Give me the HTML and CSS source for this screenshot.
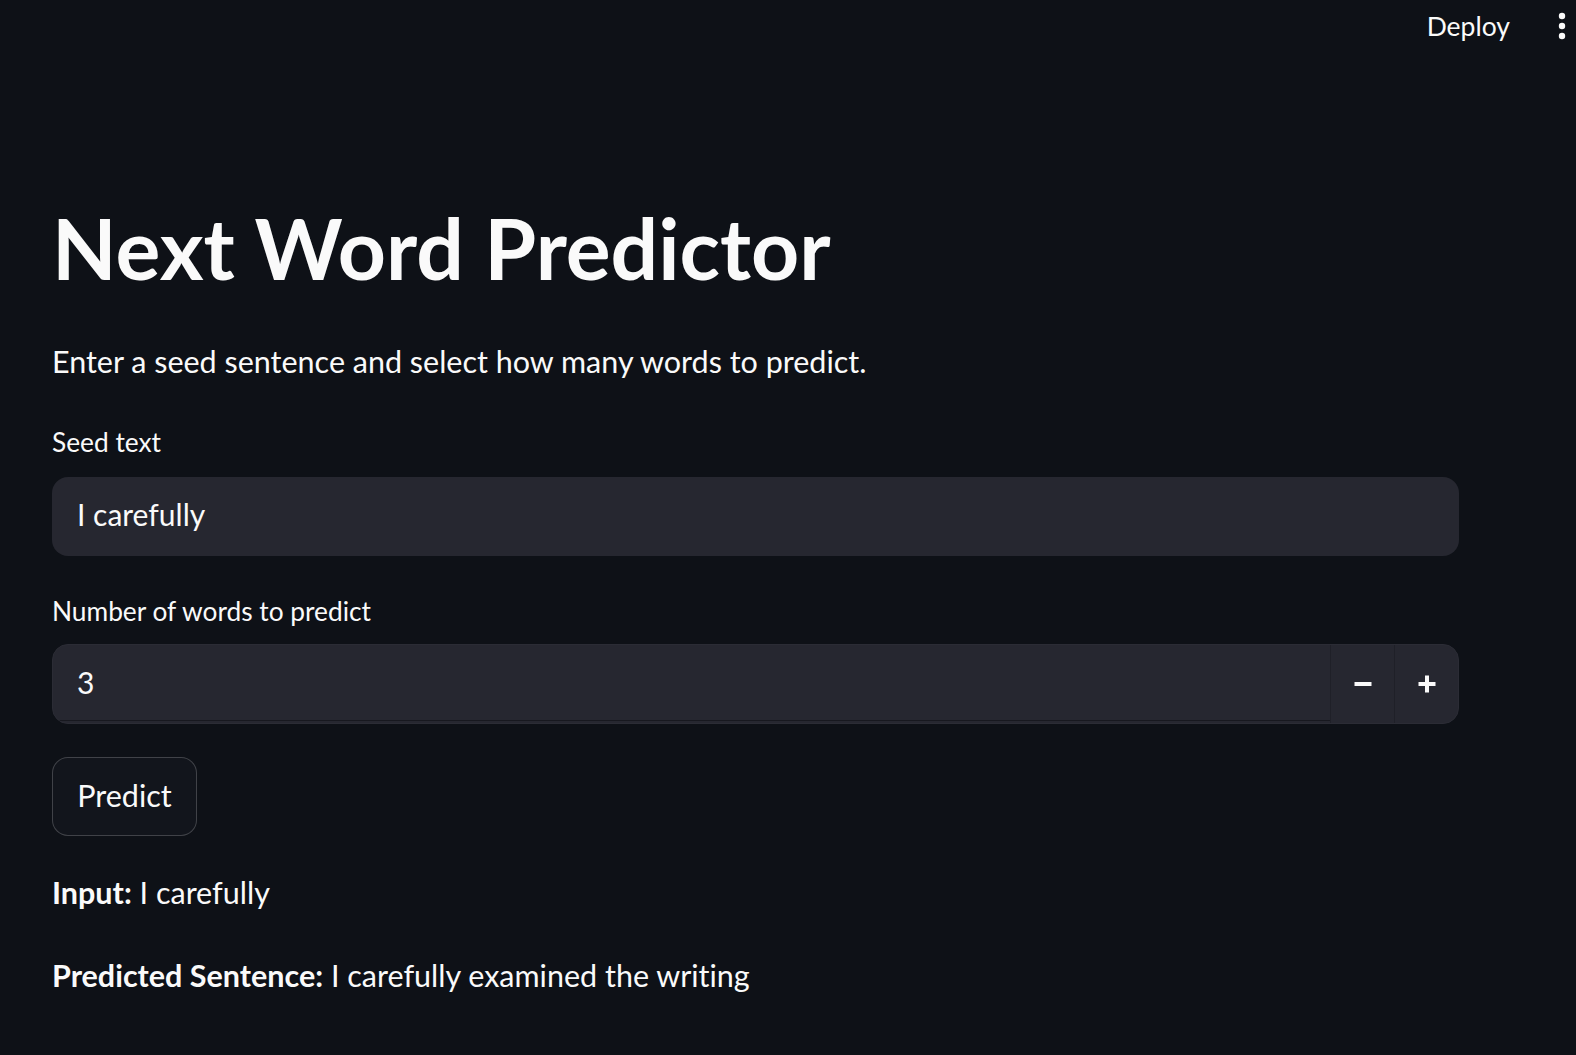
FILE: index.html
```html
<!DOCTYPE html>
<html lang="en">
<head>
<meta charset="utf-8">
<title>Next Word Predictor</title>
<link rel="stylesheet" href="styles.css">
</head>
<body>
<header class="topbar">
  <span class="deploy">Deploy</span>
  <span class="kebab" aria-label="menu">
    <svg width="8" height="28" viewBox="0 0 8 28"><circle cx="4" cy="4" r="3.2" fill="#fafafa"/><circle cx="4" cy="14" r="3.2" fill="#fafafa"/><circle cx="4" cy="24" r="3.2" fill="#fafafa"/></svg>
  </span>
</header>
<main class="main">
  <h1 class="title">Next Word Predictor</h1>
  <p class="lead">Enter a seed sentence and select how many words to predict.</p>

  <label class="label label-seed">Seed text</label>
  <div class="field">I carefully</div>

  <label class="label label-num">Number of words to predict</label>
  <div class="number">
    <div class="number-value">3</div>
    <button class="step step-minus" aria-label="decrement">
      <svg width="18" height="18" viewBox="0 0 18 18"><rect x="0.5" y="7" width="17" height="4" fill="#fafafa"/></svg>
    </button>
    <button class="step step-plus" aria-label="increment">
      <svg width="18" height="18" viewBox="0 0 18 18"><rect x="0.5" y="7" width="17" height="4" fill="#fafafa"/><rect x="7" y="0.5" width="4" height="17" fill="#fafafa"/></svg>
    </button>
  </div>

  <button class="predict">Predict</button>

  <p class="out out-input"><strong>Input:</strong> I carefully</p>
  <p class="out out-pred"><strong>Predicted Sentence:</strong> I carefully examined the writing</p>
</main>
</body>
</html>
```

FILE: styles.css
```css
* { box-sizing: border-box; }
html, body {
  margin: 0;
  padding: 0;
  background: #0e1117;
  color: #fafafa;
  font-family: Lato, "Noto Sans", sans-serif;
  font-variant-ligatures: none;
}
body { height: 1055px; overflow: hidden; }

.topbar {
  height: 56px;
  display: flex;
  align-items: flex-start;
  justify-content: flex-end;
  padding: 6px 10px 0 0;
}
.deploy {
  font-size: 26.5px;
  line-height: 40px;
  margin-right: 48px;
}
.kebab { display: flex; align-items: center; height: 40px; }
.kebab svg { display: block; }

.main {
  padding-left: 52px;
  width: 1459px;
}
.title {
  margin: 142px 0 0;
  font-size: 84px;
  line-height: 100px;
  font-weight: 700;
}
.lead {
  margin: 40px 0 0;
  font-size: 30.5px;
  line-height: 46px;
}
.label {
  display: block;
  font-size: 26.3px;
  line-height: 40px;
}
.label-seed { margin-top: 38px; }
.label-num { margin-top: 35px; }

.field {
  margin-top: 15px;
  height: 79px;
  background: #262730;
  border-radius: 16px;
  padding-left: 25px;
  font-size: 30px;
  line-height: 75px;
}

.number {
  margin-top: 13px;
  height: 80px;
  display: flex;
  background: #262730;
  border-radius: 16px;
  border: 1px solid #2b2c35;
  overflow: hidden;
}
.number-value {
  flex: 1;
  padding-left: 24px;
  font-size: 30px;
  line-height: 75px;
  border-bottom: 1px solid #17181f;
  margin-bottom: 2px;
}
.step {
  width: 64px;
  background: transparent;
  border: 0;
  border-left: 1px solid #1f2028;
  padding: 0;
  display: flex;
  align-items: center;
  justify-content: center;
}
.step svg { display: block; }

.predict {
  display: block;
  margin-top: 33px;
  width: 145px;
  height: 79px;
  background: #12151c;
  color: #fafafa;
  border: 1px solid rgba(250, 250, 250, 0.2);
  border-radius: 16px;
  font-family: inherit;
  font-variant-ligatures: none;
  font-size: 30.5px;
  padding: 0 0 4px;
}

.out {
  font-size: 30.5px;
  line-height: 46px;
}
.out strong { font-weight: 700; }
.out-input { margin: 33px 0 0; }
.out-pred { margin: 37px 0 0; }
```
